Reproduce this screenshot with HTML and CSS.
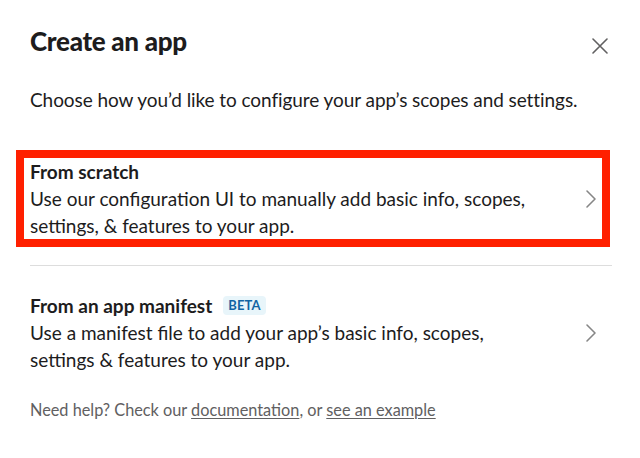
FILE: index.html
```html
<!DOCTYPE html>
<html>
<head>
<meta charset="utf-8">
<link rel="stylesheet" href="styles.css">
</head>
<body>
<div class="modal">
  <div class="header">
    <h1 class="title">Create an app</h1>
    <button class="close" aria-label="Close">
      <svg width="16" height="16" viewBox="0 0 16 16"><path d="M1 1L15 15M15 1L1 15" stroke="#616061" stroke-width="1.6" fill="none" stroke-linecap="round"/></svg>
    </button>
  </div>
  <p class="intro">Choose how you’d like to configure your app’s scopes and settings.</p>
  <div class="option highlighted">
    <div class="option-text">
      <div class="option-title">From scratch</div>
      <div class="option-desc">Use our configuration UI to manually add basic info, scopes, settings, &amp; features to your app.</div>
    </div>
    <svg class="chevron" width="12" height="20" viewBox="0 0 12 20"><path d="M2 2L10 10L2 18" stroke="#868686" stroke-width="1.6" fill="none" stroke-linecap="round" stroke-linejoin="round"/></svg>
  </div>
  <div class="divider"></div>
  <div class="option second">
    <div class="option-text">
      <div class="option-title">From an app manifest <span class="badge">BETA</span></div>
      <div class="option-desc">Use a manifest file to add your app’s basic info, scopes, settings &amp; features to your app.</div>
    </div>
    <svg class="chevron" width="12" height="20" viewBox="0 0 12 20"><path d="M2 2L10 10L2 18" stroke="#868686" stroke-width="1.6" fill="none" stroke-linecap="round" stroke-linejoin="round"/></svg>
  </div>
  <p class="help">Need help? Check our <a href="#">documentation</a>, or <a href="#">see an example</a></p>
</div>
</body>
</html>
```
FILE: styles.css
```css
html, body {
  margin: 0;
  padding: 0;
  background: #ffffff;
}
body {
  font-family: Lato, "Noto Sans", sans-serif;
  color: #1d1c1d;
}
.modal {
  width: 640px;
  height: 458px;
  box-sizing: border-box;
  padding: 23px 28px 0 30px;
}
.header {
  display: flex;
  justify-content: space-between;
  align-items: center;
  height: 36px;
}
.title {
  margin: 0;
  font-size: 26px;
  font-weight: 900;
  letter-spacing: -0.3px;
  line-height: 36px;
}
.close {
  border: 0;
  background: none;
  padding: 0;
  margin-right: 4px;
  margin-top: 10px;
  width: 16px;
  height: 16px;
  display: flex;
}
.intro {
  margin: 27px 0 0;
  font-size: 19px;
  letter-spacing: -0.07px;
  line-height: 27px;
}
.option {
  display: flex;
  align-items: center;
  justify-content: space-between;
}
.highlighted {
  margin: 37px 0 0 -14px;
  width: 594px;
  box-sizing: border-box;
  border: 8px solid #ff2000;
  padding: 0 5px 0 6px;
}
.second {
  margin-top: 26px;
  padding-right: 15px;
}
.option-title {
  font-size: 19px;
  font-weight: 700;
  line-height: 27px;
  display: flex;
  align-items: center;
}
.option-desc {
  font-size: 19px;
  line-height: 27px;
  width: 505px;
}
.chevron {
  flex: none;
}
.divider {
  height: 1px;
  background: #dddddd;
  margin: 18px 0 0;
  width: 582px;
}
.badge {
  display: inline-block;
  margin-left: 11px;
  background: #e8f5fa;
  color: #1264a3;
  font-size: 13px;
  font-weight: 700;
  letter-spacing: 0.1px;
  line-height: 19px;
  padding: 0 5px;
  border-radius: 4px;
}
.help {
  margin: 26px 0 0;
  font-size: 16.3px;
  line-height: 22px;
  color: #616061;
}
.help a {
  color: #616061;
  text-decoration: underline;
  text-underline-offset: 2px;
}
```
